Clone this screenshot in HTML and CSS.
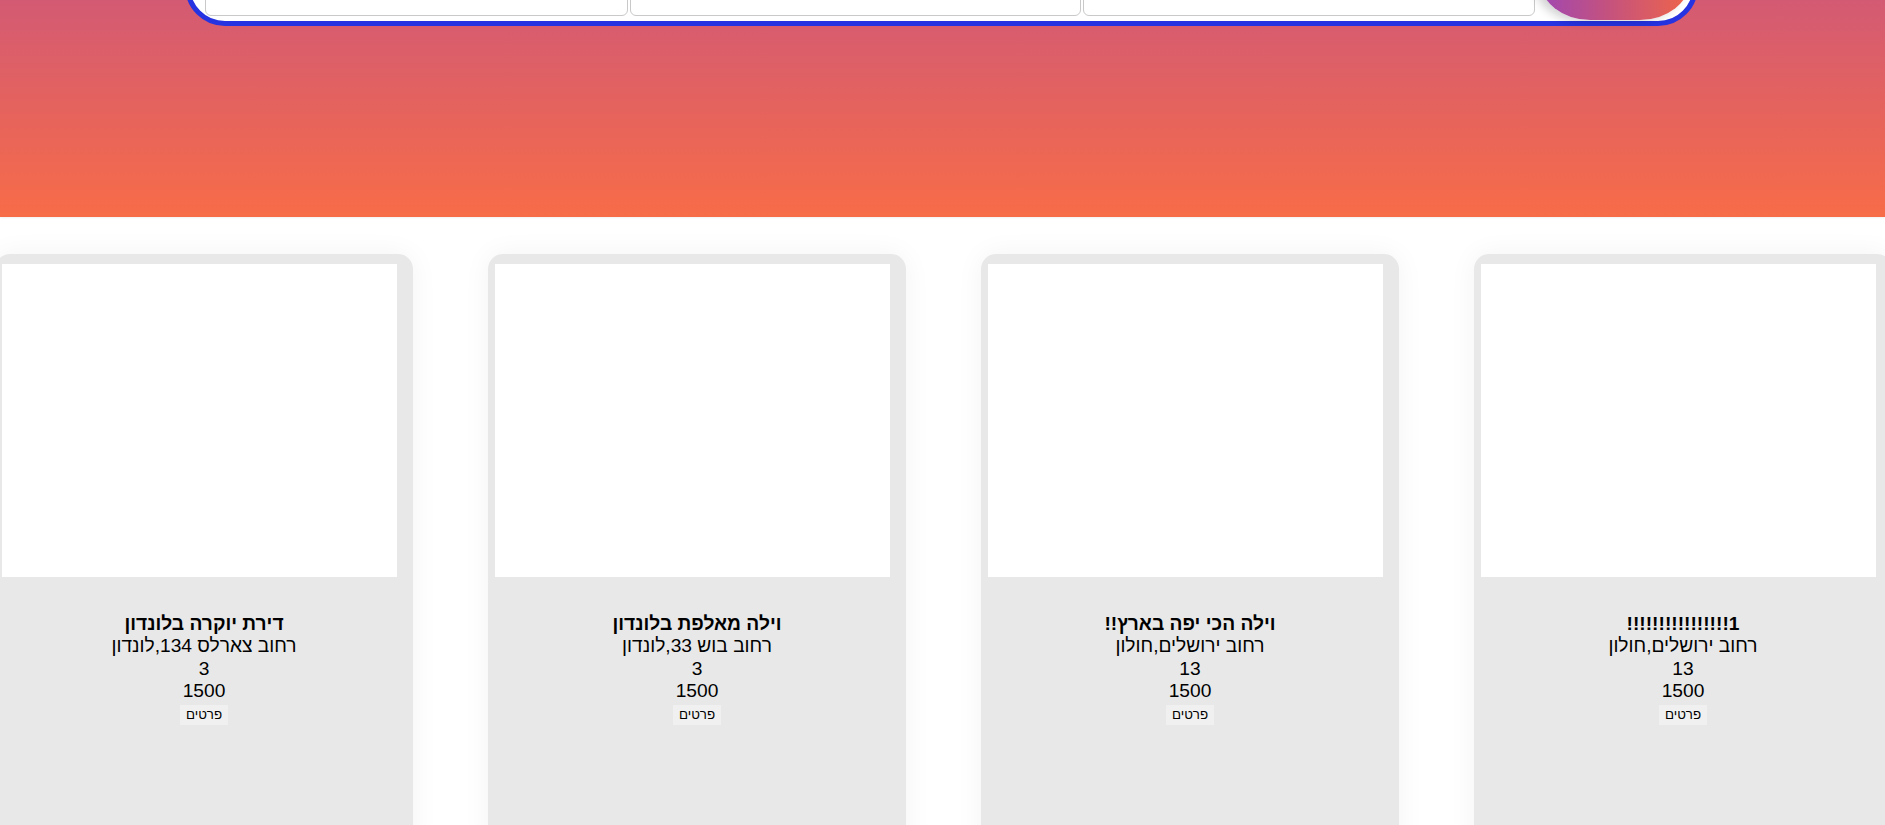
FILE: index.html
```html
<!DOCTYPE html>
<html lang="he" dir="rtl">
<head>
<meta charset="utf-8">
<title>דירות</title>
<link rel="stylesheet" href="styles.css">
</head>
<body>
<header class="hero">
  <form class="search">
    <input class="field" type="text">
    <input class="field" type="text">
    <input class="field" type="text">
    <button class="go" type="button" aria-label="חיפוש"></button>
  </form>
</header>
<main class="listings">
  <article class="card">
    <div class="photo"></div>
    <div class="info">
      <h3 class="title">דירת יוקרה בלונדון</h3>
      <div>רחוב צארלס 134,לונדון</div>
      <div>3</div>
      <div>1500</div>
      <button class="more" type="button">פרטים</button>
    </div>
  </article>
  <article class="card">
    <div class="photo"></div>
    <div class="info">
      <h3 class="title">וילה מאלפת בלונדון</h3>
      <div>רחוב בוש 33,לונדון</div>
      <div>3</div>
      <div>1500</div>
      <button class="more" type="button">פרטים</button>
    </div>
  </article>
  <article class="card">
    <div class="photo"></div>
    <div class="info">
      <h3 class="title">וילה הכי יפה בארץ!!</h3>
      <div>רחוב ירושלים,חולון</div>
      <div>13</div>
      <div>1500</div>
      <button class="more" type="button">פרטים</button>
    </div>
  </article>
  <article class="card">
    <div class="photo"></div>
    <div class="info">
      <h3 class="title">1!!!!!!!!!!!!!!!!</h3>
      <div>רחוב ירושלים,חולון</div>
      <div>13</div>
      <div>1500</div>
      <button class="more" type="button">פרטים</button>
    </div>
  </article>
</main>
</body>
</html>
```
FILE: styles.css
```css
html, body {
  margin: 0;
  padding: 0;
  background: #ffffff;
  overflow: hidden;
}
body {
  font-family: "Liberation Sans", Arial, sans-serif;
  color: #000;
}
.hero {
  height: 217px;
  background: linear-gradient(to bottom, #d35a73 0%, #f76c48 100%);
  box-shadow: 0 1px 2px rgba(0,0,0,0.06);
  overflow: visible;
  display: flex;
  flex-direction: column;
  align-items: center;
}
.search {
  direction: ltr;
  box-sizing: border-box;
  width: 1513px;
  height: 80px;
  margin-top: -54px;
  margin-left: -2px;
  border: 5px solid #2633e0;
  border-radius: 50px;
  background: #ffffff;
  display: flex;
  align-items: flex-end;
  gap: 2px;
  padding: 0 4px 1px 15px;
}
.field {
  flex: 0 0 auto;
  box-sizing: border-box;
  height: 60px;
  margin: 0 0 4px 0;
  border: 1px solid #c9c9c9;
  border-radius: 6px;
  background: #fff;
  padding: 0;
}
.field:nth-child(1) { width: 423px; }
.field:nth-child(2) { width: 451px; }
.field:nth-child(3) { width: 452px; }
.go {
  flex: 0 0 auto;
  width: 150px;
  height: 80px;
  margin-left: 3px;
  border: none;
  border-radius: 0 0 50px 50px / 0 0 40px 40px;
  background: linear-gradient(to right, #a047b2 0%, #c4527f 45%, #ef6549 100%);
  box-shadow: -6px 2px 10px rgba(0,0,0,0.18);
}
.listings {
  direction: ltr;
  display: flex;
  justify-content: center;
  gap: 75px;
  padding-top: 37px;
  margin-left: 2px;
}
.card {
  flex: 0 0 auto;
  box-sizing: border-box;
  width: 418px;
  height: 700px;
  padding: 10px 16px 0 7px;
  background: #e8e8e8;
  border-radius: 15px;
  box-shadow: 0 0 28px rgba(0,0,0,0.05);
}
.photo {
  width: 395px;
  height: 313px;
  background: #ffffff;
}
.info {
  direction: rtl;
  margin-right: -16px;
  margin-left: -7px;
  padding-top: 36px;
  text-align: center;
  font-size: 19.2px;
  line-height: 22.3px;
}
.title {
  margin: 0;
  font-size: 19.2px;
  font-weight: bold;
  line-height: 22.3px;
}
.more {
  margin-top: 2px;
  font-family: "Liberation Sans", Arial, sans-serif;
  font-size: 13.33px;
  line-height: 16px;
  padding: 2px 6px;
  background: #f0f0f0;
  border: none;
  color: #000;
}
```
